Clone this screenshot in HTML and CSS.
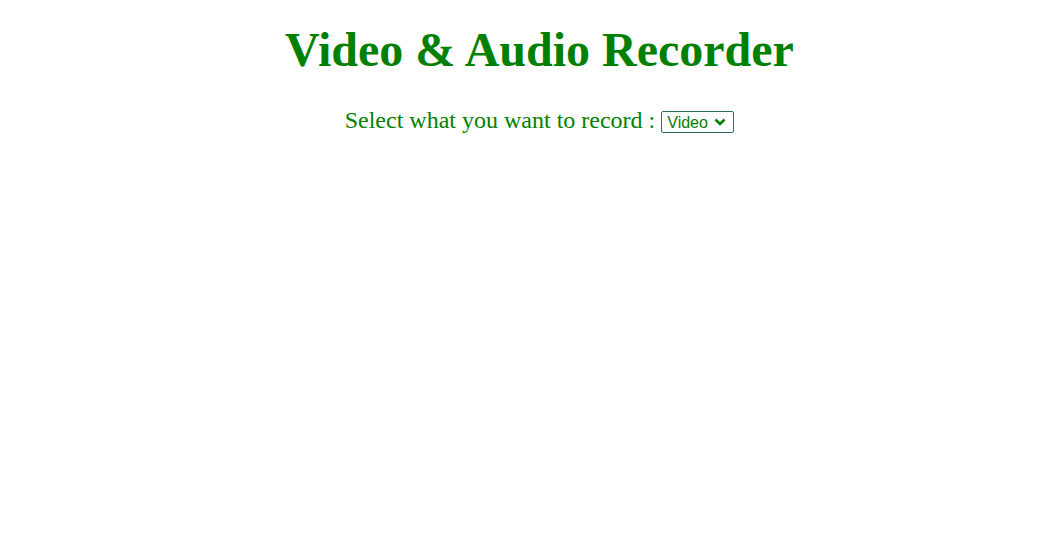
FILE: index.html
```html
<!DOCTYPE html>
<html>
<head>
<meta charset="utf-8">
<link rel="stylesheet" href="styles.css">
</head>
<body>
<div class="page">
  <h1 class="title">Video &amp; Audio Recorder</h1>
  <div class="chooser">
    <span class="label">Select what you want to record :</span>
    <select class="mode">
      <option>Video</option>
      <option>Audio</option>
    </select>
  </div>
</div>
</body>
</html>
```
FILE: styles.css
```css
html, body {
  margin: 0;
  padding: 0;
  background: #fff;
}
.page {
  display: flex;
  flex-direction: column;
  align-items: center;
  font-family: "Liberation Serif", "Times New Roman", serif;
  color: #008000;
  padding-top: 23px;
  padding-left: 16px;
}
.title {
  margin: 0;
  font-size: 48px;
  font-weight: bold;
  line-height: 53px;
}
.chooser {
  margin-top: 30px;
  display: flex;
  align-items: center;
  gap: 6px;
}
.label {
  font-size: 24px;
  line-height: 28px;
}
.mode {
  -webkit-appearance: none;
  appearance: none;
  box-sizing: border-box;
  font-family: "Liberation Sans", Arial, sans-serif;
  font-size: 16px;
  color: #008000;
  border: 1px solid #2e6e5e;
  border-radius: 2px;
  background-color: #fff;
  background-image: url("data:image/svg+xml;utf8,<svg xmlns='http://www.w3.org/2000/svg' width='12' height='8' viewBox='0 0 12 8'><path d='M1.5 1.5 L6 6 L10.5 1.5' fill='none' stroke='%23008000' stroke-width='2.6'/></svg>");
  background-repeat: no-repeat;
  background-position: right 7px center;
  height: 22px;
  width: 73px;
  padding: 0 0 0 5px;
  margin: 4px 0 0;
}
```
